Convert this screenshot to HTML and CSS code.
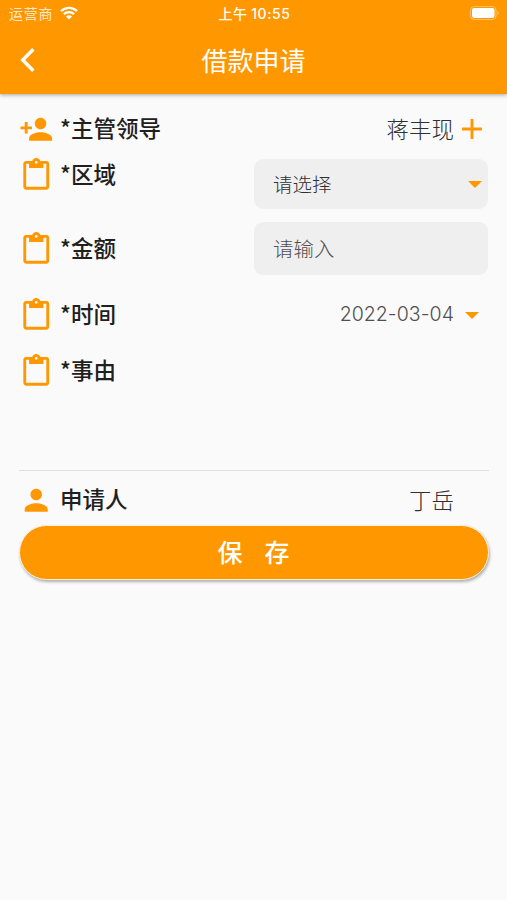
FILE: index.html
```html
<!DOCTYPE html>
<html lang="zh-CN">
<head>
<meta charset="utf-8">
<meta name="viewport" content="width=device-width, initial-scale=1">
<title>借款申请</title>
<link rel="stylesheet" href="styles.css">
</head>
<body>
<svg class="defs" aria-hidden="true">
  <symbol id="clip" viewBox="0 0 24 24"><path d="M19 2h-4.18C14.4.84 13.3 0 12 0c-1.3 0-2.4.84-2.82 2H5c-1.1 0-2 .9-2 2v16c0 1.1.9 2 2 2h14c1.1 0 2-.9 2-2V4c0-1.1-.9-2-2-2zm-7 0c.55 0 1 .45 1 1s-.45 1-1 1-1-.45-1-1 .45-1 1-1zm7 18H5V4h2v3h10V4h2v16z"/></symbol>
  <symbol id="drop" viewBox="7 10 10 5"><path d="M7 10l5 5 5-5z"/></symbol>
</svg>
<header class="top">
  <div class="status">
    <div class="carrier"><span>运营商</span>
      <svg class="wifi" viewBox="0 0 18 14"><path d="M1 5.2a11.5 11.5 0 0 1 16 0M3.9 8.1a7.4 7.4 0 0 1 10.2 0" fill="none" stroke="#fff" stroke-width="2.3"/><path d="M9 13.6L5.9 10.6a4.4 4.4 0 0 1 6.2 0z" fill="#fff"/></svg>
    </div>
    <div class="clock">上午 <span class="digits">10:55</span></div>
    <svg class="battery" viewBox="0 0 30 14"><rect x=".5" y=".5" width="25.5" height="13" rx="3.5" fill="none" stroke="#fff" stroke-opacity=".4"/><rect x="2" y="2" width="22.5" height="10" rx="2.2" fill="#fff"/><path d="M27.5 5v4a2.2 2.2 0 0 0 0-4z" fill="#fff" fill-opacity=".45"/></svg>
  </div>
  <div class="bar">
    <svg class="back" viewBox="0 0 14 24"><path d="M12.8 1.2L2.2 12l10.6 10.8" fill="none" stroke="#fff" stroke-width="3.4"/></svg>
    <h1>借款申请</h1>
  </div>
</header>
<main class="form">
  <div class="row leader">
    <svg class="icon" viewBox="0 0 24 24"><path d="M15 12c2.21 0 4-1.79 4-4s-1.79-4-4-4-4 1.79-4 4 1.79 4 4 4zm-9-2V7H4v3H1v2h3v3h2v-3h3v-2H6zm9 4c-2.67 0-8 1.34-8 4v2h16v-2c0-2.66-5.33-4-8-4z"/></svg>
    <label>*主管领导</label>
    <span class="value">蒋丰现</span>
    <svg class="plus" viewBox="5 5 14 14"><path d="M19 13h-6v6h-2v-6H5v-2h6V5h2v6h6v2z"/></svg>
  </div>
  <div class="row area">
    <svg class="icon"><use href="#clip"/></svg>
    <label>*区域</label>
    <div class="box select"><span>请选择</span><svg class="caret"><use href="#drop"/></svg></div>
  </div>
  <div class="row amount">
    <svg class="icon"><use href="#clip"/></svg>
    <label>*金额</label>
    <div class="box input"><span>请输入</span></div>
  </div>
  <div class="row date">
    <svg class="icon"><use href="#clip"/></svg>
    <label>*时间</label>
    <span class="value">2022-03-04</span>
    <svg class="caret"><use href="#drop"/></svg>
  </div>
  <div class="row reason">
    <svg class="icon"><use href="#clip"/></svg>
    <label>*事由</label>
  </div>
  <div class="row applicant">
    <svg class="icon" viewBox="0 0 24 24"><path d="M12 12c2.21 0 4-1.79 4-4s-1.79-4-4-4-4 1.79-4 4 1.79 4 4 4zm0 2c-2.67 0-8 1.34-8 4v2h16v-2c0-2.66-5.33-4-8-4z"/></svg>
    <label>申请人</label>
    <span class="value">丁岳</span>
  </div>
  <button class="save" type="button"><span>保</span><span>存</span></button>
</main>
</body>
</html>
```
FILE: styles.css
```css
* { box-sizing: border-box; }
body {
  margin: 0;
  min-height: 900px;
  background: #fafafa;
  color: #202020;
  font-family: Inter, "Noto Sans CJK SC", sans-serif;
}
svg { display: block; flex: none; fill: #ff9800; }
.defs { width: 0; height: 0; position: absolute; }
.top {
  height: 94px;
  background: #ff9800;
  color: #fff;
  box-shadow: 0 1px 4px rgba(0, 0, 0, .34);
}
.status {
  height: 27px;
  padding: 0 7px 0 9px;
  display: grid;
  grid-template-columns: 1fr auto 1fr;
  align-items: center;
  font-size: 14px;
  line-height: 20px;
}
.carrier { display: flex; align-items: center; gap: 7px; color: rgba(255, 255, 255, .8); letter-spacing: .7px; }
.wifi { width: 18px; height: 14px; margin-top: -1px; }
.clock { font-weight: 500; letter-spacing: .3px; }
.digits { letter-spacing: .55px; }
.battery { width: 30px; height: 14px; margin-top: -1px; justify-self: end; }
.bar {
  height: 67px;
  padding: 0 20px;
  display: grid;
  grid-template-columns: 1fr auto 1fr;
  align-items: center;
}
.back { width: 15px; height: 24px; margin-top: -2px; }
h1 { margin: 2px 0 0; font-size: 26px; font-weight: 400; line-height: 36px; }
.form { padding: 18px 18px 0 19px; }
.row { display: flex; align-items: flex-start; }
.icon { width: 34.5px; height: 34.5px; }
label {
  margin-left: 6.5px;
  font-family: "Noto Sans CJK SC", sans-serif;
  font-size: 22.5px;
  font-weight: 500;
  line-height: 30px;
}
.value { margin-left: auto; color: #303030; font-size: 22.5px; font-weight: 300; line-height: 36px; }
.leader { height: 46px; }
.plus { width: 20px; height: 20px; margin: 7px 7px 0 8px; }
.area { height: 64px; }
.amount { height: 76px; }
.amount .icon, .amount label { margin-top: 10px; }
.date { height: 56px; }
.date .value { color: #505050; font-size: 19.5px; letter-spacing: .05px; line-height: 33px; }
.date .caret { margin: 14px 10px 0 11px; }
.caret { width: 14px; height: 7px; }
.box {
  width: 234px;
  margin-left: auto;
  margin-right: 1px;
  padding: 0 6px 0 19px;
  display: flex;
  align-items: center;
  justify-content: space-between;
  border-radius: 9px;
  background: #efefef;
  color: #303030;
  font-size: 19.5px;
  font-weight: 300;
}
.box span { margin-top: -2px; }
.select { height: 50px; margin-top: 1px; }
.input { height: 53px; font-size: 20.5px; color: #505050; }
.reason { height: 117px; border-bottom: 1.5px solid #dedede; }
.applicant { height: 54px; padding-top: 12px; }
.applicant .value { margin-right: 35px; }
.save {
  width: 470px;
  height: 55px;
  padding: 1px 1px 0 0;
  border: 1.5px solid #fff0d8;
  border-radius: 28px;
  background: #ff9800;
  box-shadow: 1px 2px 3px rgba(0, 0, 0, .3);
  display: flex;
  justify-content: center;
  align-items: center;
  gap: 22px;
  color: #fff;
  font: 500 25px/36px Inter, "Noto Sans CJK SC", sans-serif;
}
```
